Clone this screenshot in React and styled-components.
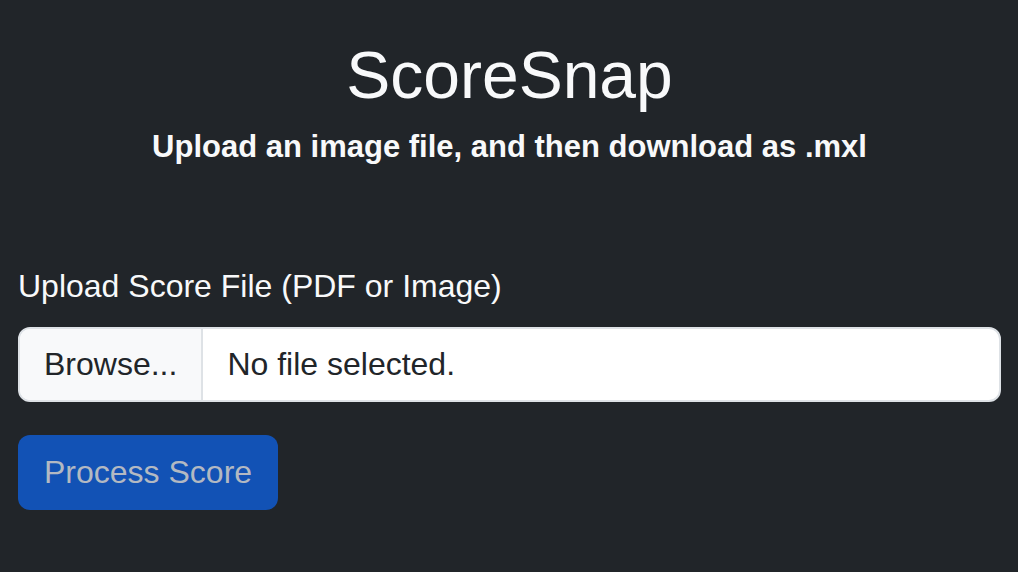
import styled, { createGlobalStyle } from "styled-components";

const GlobalStyle = createGlobalStyle`
  html, body {
    margin: 0;
    padding: 0;
    background-color: #212529;
  }
  body {
    font-family: "Liberation Sans", Arial, sans-serif;
    color: #f8f9fa;
  }
`;

export default function App() {
  return (
    <Page>
      <GlobalStyle />
      <Header>
        <Title>ScoreSnap</Title>
        <Subtitle>Upload an image file, and then download as .mxl</Subtitle>
      </Header>
      <Form>
        <Label>Upload Score File (PDF or Image)</Label>
        <FileInput>
          <BrowseBtn>Browse...</BrowseBtn>
          <FileName>No file selected.</FileName>
        </FileInput>
        <SubmitBtn disabled>Process Score</SubmitBtn>
      </Form>
    </Page>
  );
}

const Page = styled.div`
  width: 1018px;
  height: 572px;
  box-sizing: border-box;
  padding: 0 17px 0 18px;
  background-color: #212529;
`;

const Header = styled.div`
  display: flex;
  flex-direction: column;
  align-items: center;
  padding-top: 36px;
`;

const Title = styled.h1`
  margin: 0;
  font-size: 66px;
  font-weight: 500;
  line-height: 1.2;
  color: #f8f9fa;
`;

const Subtitle = styled.p`
  margin: 13px 0 0;
  font-size: 31px;
  font-weight: 700;
  line-height: 1.2;
  color: #f8f9fa;
`;

const Form = styled.div`
  display: flex;
  flex-direction: column;
  align-items: flex-start;
  padding-top: 102px;
`;

const Label = styled.label`
  font-size: 32px;
  line-height: 1.2;
  margin-bottom: 21px;
  color: #f8f9fa;
`;

const FileInput = styled.div`
  display: flex;
  width: 100%;
  height: 75px;
  box-sizing: border-box;
  border: 2px solid #dee2e6;
  border-radius: 12px;
  background-color: #fff;
  overflow: hidden;
  font-size: 32px;
  color: #212529;
`;

const BrowseBtn = styled.div`
  display: flex;
  align-items: center;
  padding: 0 24px;
  background-color: #f8f9fa;
  border-right: 2px solid #dee2e6;
`;

const FileName = styled.div`
  display: flex;
  align-items: center;
  padding-left: 24px;
`;

const SubmitBtn = styled.button`
  margin-top: 33px;
  height: 75px;
  padding: 0 26px;
  border: none;
  border-radius: 12px;
  background-color: #1252b5;
  color: #b3b9c2;
  font-family: "Liberation Sans", Arial, sans-serif;
  font-size: 32px;
`;
